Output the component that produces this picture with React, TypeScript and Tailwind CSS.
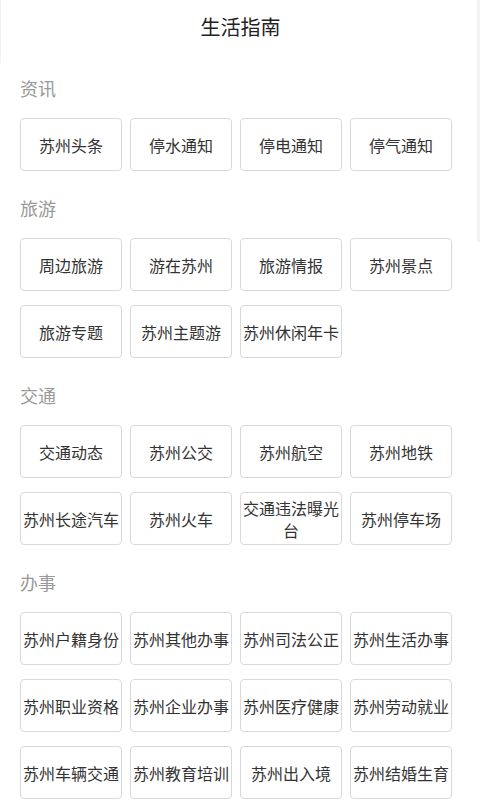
import React from 'react'

type Section = {
  title: string
  items: string[]
}

const sections: Section[] = [
  { title: '资讯', items: ['苏州头条', '停水通知', '停电通知', '停气通知'] },
  {
    title: '旅游',
    items: ['周边旅游', '游在苏州', '旅游情报', '苏州景点', '旅游专题', '苏州主题游', '苏州休闲年卡'],
  },
  {
    title: '交通',
    items: ['交通动态', '苏州公交', '苏州航空', '苏州地铁', '苏州长途汽车', '苏州火车', '交通违法曝光台', '苏州停车场'],
  },
  {
    title: '办事',
    items: [
      '苏州户籍身份',
      '苏州其他办事',
      '苏州司法公正',
      '苏州生活办事',
      '苏州职业资格',
      '苏州企业办事',
      '苏州医疗健康',
      '苏州劳动就业',
      '苏州车辆交通',
      '苏州教育培训',
      '苏州出入境',
      '苏州结婚生育',
    ],
  },
]

const font = { fontFamily: '"Noto Sans CJK SC", "Noto Sans", sans-serif' }

export default function App() {
  return (
    <div className="relative w-[480px] min-h-[800px] bg-white" style={font}>
      {/* header */}
      <header className="h-[63px] pt-[14px] flex justify-center border-l border-[#eef2fb]">
        <h1 className="text-[20px] leading-[26px] text-[#222] font-normal">生活指南</h1>
      </header>

      <div className="pt-[2px]">
        {sections.map((section) => (
          <section key={section.title} className="pt-[10px] pb-[14px]">
            <div className="px-[20px] h-[26px] leading-[26px] text-[18px] text-[#999] mb-[17px]">
              {section.title}
            </div>
            <div className="pl-[20px] grid grid-cols-[repeat(4,102px)] gap-x-[8px] gap-y-[14px]">
              {section.items.map((item) => (
                <button
                  key={item}
                  className="h-[53px] w-[102px] px-[2px] flex items-center justify-center text-center rounded-[4px] border border-[#d9d9d9] bg-white text-[16px] leading-[22px] text-[#333]"
                >
                  {item}
                </button>
              ))}
            </div>
          </section>
        ))}
      </div>

      {/* scroll indicator */}
      <div className="absolute top-0 right-0 w-[3px] h-[242px] bg-[#f3f3f3]" />
    </div>
  )
}
